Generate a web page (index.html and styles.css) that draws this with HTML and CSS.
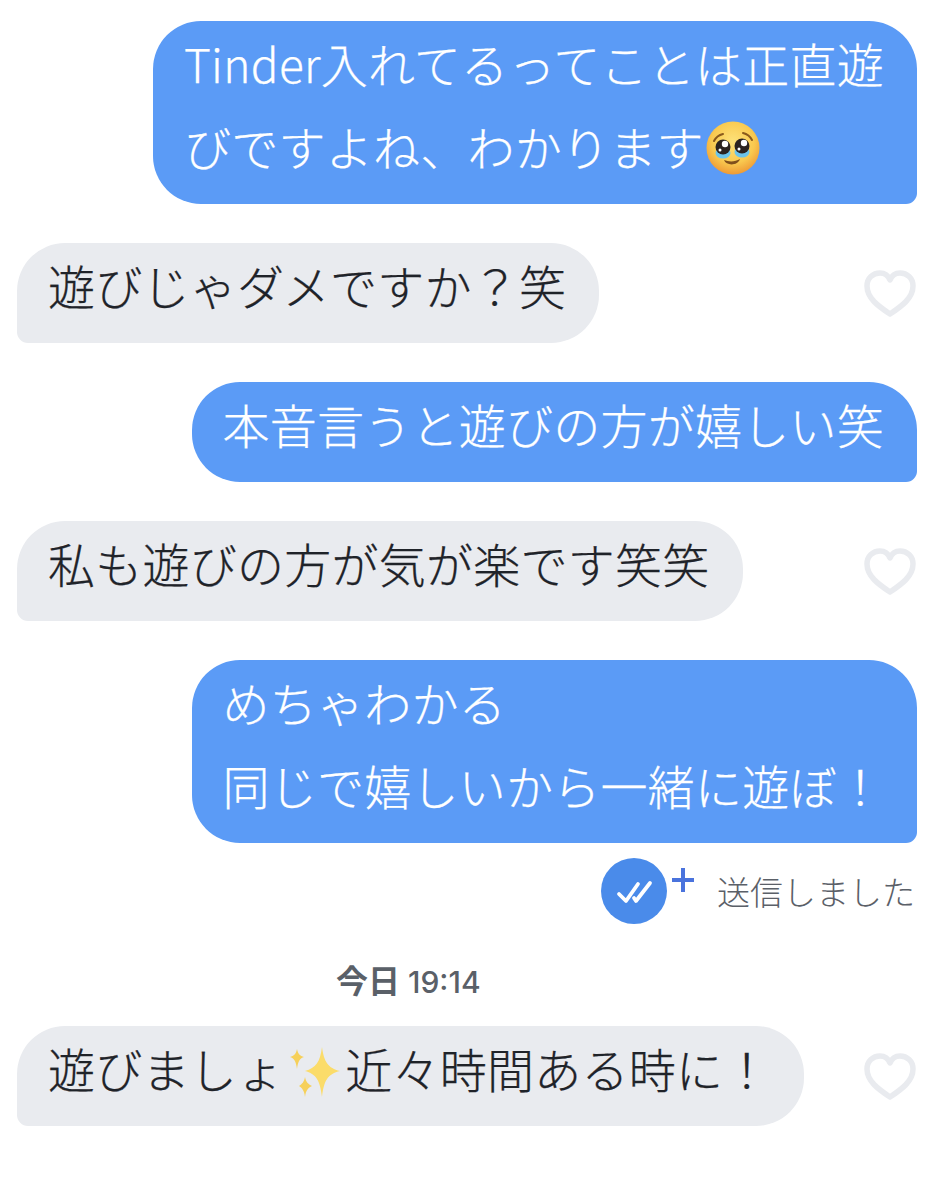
FILE: index.html
```html
<!DOCTYPE html>
<html lang="ja">
<head>
  <meta charset="UTF-8" />
  <meta name="viewport" content="width=device-width, initial-scale=1.0" />
  <title>Chat</title>
  <link rel="stylesheet" href="styles.css">
</head>
<body>
<main class="chat">
  <div class="bubble sent"><span class="latin">Tinder</span>入れてるってことは正直遊<br>びですよね、わかります<svg class="emoji" viewBox="0 0 54 54">
      <defs>
        <radialGradient id="face" cx="50%" cy="38%" r="62%">
          <stop offset="0" stop-color="#fde27a" />
          <stop offset="0.65" stop-color="#f9c94f" />
          <stop offset="1" stop-color="#ee9a36" />
        </radialGradient>
      </defs>
      <circle cx="27" cy="27" r="26.5" fill="url(#face)" />
      <path d="M8 20c2-4 5-6 9-7M46 19c-2-4-5-6-9-7" fill="none" stroke="#8a5a1c" stroke-width="2" stroke-linecap="round" />
      <ellipse cx="17" cy="32" rx="7.5" ry="5.5" fill="#6cc4ea" />
      <ellipse cx="36" cy="31" rx="7.5" ry="5.5" fill="#6cc4ea" />
      <circle cx="17" cy="26" r="7.5" fill="#2b2320" />
      <circle cx="36" cy="25" r="7.5" fill="#2b2320" />
      <circle cx="19" cy="23" r="3.2" fill="#fff" />
      <circle cx="38" cy="22" r="3.2" fill="#fff" />
      <circle cx="14" cy="29" r="1.5" fill="#fff" />
      <circle cx="33" cy="28" r="1.5" fill="#fff" />
      <path d="M18 39c5 2 11 2 16-1c-2 7-14 7-16 1z" fill="#7f4f1c" />
    </svg></div>

  <div class="row">
    <div class="bubble received">遊びじゃダメですか？笑</div>
    <svg class="heart" viewBox="0 0 52 47"><path d="M26 44C14 36 3 28 3 16C3 8 9 3 16 3c4 0 8 2 10 7c2-5 6-7 10-7c7 0 13 5 13 13c0 12-11 20-23 28z" /></svg>
  </div>

  <div class="bubble sent">本音言うと遊びの方が嬉しい笑</div>

  <div class="row">
    <div class="bubble received">私も遊びの方が気が楽です笑笑</div>
    <svg class="heart" viewBox="0 0 52 47"><path d="M26 44C14 36 3 28 3 16C3 8 9 3 16 3c4 0 8 2 10 7c2-5 6-7 10-7c7 0 13 5 13 13c0 12-11 20-23 28z" /></svg>
  </div>

  <div class="group">
    <div class="bubble sent">めちゃわかる<br>同じで嬉しいから一緒に遊ぼ！</div>
    <div class="status">
      <span class="status-icon">
        <svg viewBox="0 0 66 66"><circle cx="33" cy="33" r="33" fill="#4a8bea" /><path d="M18 36l7 7l12-17M33 40l2 3l14-18" fill="none" stroke="#fff" stroke-width="3.8" stroke-linecap="round" stroke-linejoin="round" /></svg>
        <svg class="plus" viewBox="0 0 22 24"><path d="M11 0v24M0 12h22" stroke="#4a73dd" stroke-width="4" /></svg>
      </span>
      <span class="status-text">送信しました</span>
    </div>
  </div>

  <div class="group today">
    <div class="time"><b>今日</b> 19:14</div>
    <div class="row">
      <div class="bubble received">遊びましょ<svg class="sparkles" viewBox="0 0 52 54">
          <path d="M34 1c2 15 6 21 18 24c-12 3-16 9-18 26c-2-17-6-23-17-26c11-3 15-9 17-24z" fill="#fbdc6a" />
          <path d="M9 3c1 5 3 7 7 8c-4 1-6 4-7 12c-1-8-3-11-7-12c4-1 6-3 7-8z" fill="#f6d05a" />
          <path d="M17 31c1 5 3 7 7 9c-4 2-6 4-7 11c-1-7-3-9-6-11c3-2 5-4 6-9z" fill="#f6d05a" />
        </svg>近々時間ある時に！</div>
      <svg class="heart" viewBox="0 0 52 47"><path d="M26 44C14 36 3 28 3 16C3 8 9 3 16 3c4 0 8 2 10 7c2-5 6-7 10-7c7 0 13 5 13 13c0 12-11 20-23 28z" /></svg>
    </div>
  </div>
</main>
</body>
</html>
```

FILE: styles.css
```css
* {
  padding: 0;
  margin: 0;
  box-sizing: border-box;
}
body {
  background: #fff;
  height: 1200px;
  overflow: hidden;
  font-family: "Noto Sans CJK JP", "Noto Sans", sans-serif;
}
.chat {
  display: flex;
  flex-direction: column;
  gap: 39px;
  padding: 21px 33px 0 17px;
}
.bubble {
  font-size: 47px;
  font-weight: 300;
  letter-spacing: 0.25px;
  -webkit-text-stroke: 0.25px currentColor;
  line-height: 83px;
  padding: 0 33px 17px 31px;
  border-radius: 48px;
  white-space: nowrap;
}
.latin {
  font-size: 46px;
  line-height: 1;
  letter-spacing: 0.3px;
}
.sent {
  align-self: flex-end;
  background: #5b9bf6;
  color: #fff;
  border-bottom-right-radius: 11px;
}
.received {
  background: #e9ebef;
  color: #1f2329;
  border-bottom-left-radius: 11px;
}
.row {
  display: flex;
  align-items: center;
  justify-content: space-between;
}
.heart {
  width: 52px;
  height: 47px;
  margin-right: 1px;
  fill: none;
  stroke: #e9ebef;
  stroke-width: 5.5px;
  stroke-linejoin: round;
}
.emoji {
  width: 54px;
  height: 54px;
  vertical-align: -9px;
  margin-left: 2px;
}
.sparkles {
  width: 52px;
  height: 54px;
  vertical-align: -12px;
  margin: 0 5px 0 4px;
}
.group {
  display: flex;
  flex-direction: column;
}
.today {
  gap: 26px;
}
.status {
  display: flex;
  align-items: center;
  justify-content: flex-end;
  gap: 23px;
  margin-top: 15px;
  padding-right: 2px;
}
.status-icon {
  display: flex;
  align-items: flex-start;
  gap: 5px;
}
.status-icon svg {
  width: 66px;
  height: 66px;
}
.status-icon .plus {
  width: 22px;
  height: 24px;
  margin-top: 10px;
}
.status-text {
  font-size: 33px;
  font-weight: 300;
  color: #5b6068;
}
.time {
  margin: -1px 0 0 319px;
  font-size: 30px;
  line-height: 35px;
  font-family: "Inter", "Noto Sans CJK JP", sans-serif;
  font-weight: 500;
  color: #5a6068;
}
.time b {
  font-family: "Noto Sans CJK JP", sans-serif;
  font-size: 32px;
  font-weight: 700;
}
```
